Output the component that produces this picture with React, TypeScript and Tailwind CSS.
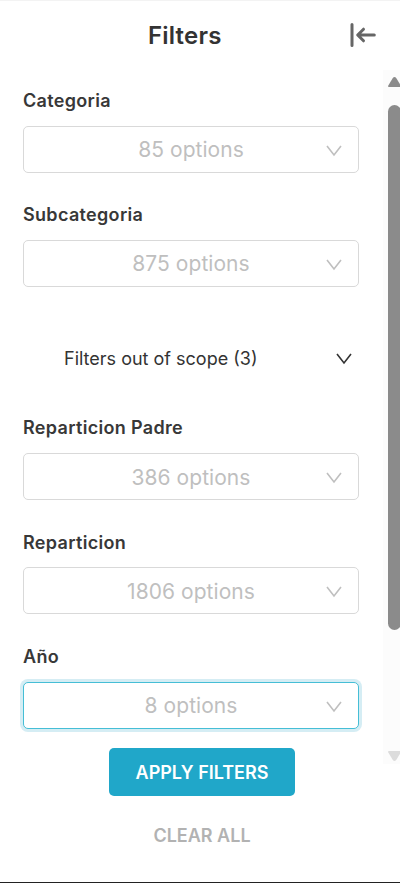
import React from "react";

function Chevron({ className }: { className: string }) {
  return (
    <svg className={className} width="16" height="12" viewBox="0 0 16 12" fill="none" stroke="currentColor" strokeWidth="1.6">
      <path d="M1 1l7 9 7-9" />
    </svg>
  );
}

type FieldProps = { label: string; count: string; focused?: boolean; labelClass?: string; countClass?: string };

function Field({ label, count, focused = false, labelClass = "", countClass = "" }: FieldProps) {
  return (
    <div className="flex flex-col">
      <label className={`h-[22px] text-[18px] leading-[22px] font-semibold tracking-[0.32px] text-[#383838] ${labelClass}`}>{label}</label>
      <div
        className={
          focused
            ? "mt-[14px] flex h-[47px] items-center rounded-[5px] border border-[#45bed6] bg-white pr-4 shadow-[0_0_0_3px_#d5edf4]"
            : "mt-[14px] flex h-[47px] items-center rounded-[5px] border border-[#d9d9d9] bg-white pr-4"
        }
      >
        <span className={`flex-1 pl-[32px] text-center text-[21px] tracking-[0.05px] text-[#bfbfbf] ${countClass}`}>{count}</span>
        <Chevron className="mt-[2px] text-[#bfbfbf]" />
      </div>
    </div>
  );
}

export default function App() {
  return (
    <div className="flex h-[883px] w-[400px] flex-col overflow-hidden border-t border-b border-t-[#f3f3f3] border-b-[#222] bg-white font-['Inter',sans-serif]">
      <header className="flex h-[67px] items-center pt-px pr-[24px] pl-[148px]">
        <h1 className="flex-1 pt-px text-[24px] font-[560] tracking-[0.2px] text-[#333]">Filters</h1>
        <svg width="27" height="24" viewBox="0 0 27 24" fill="none" stroke="#666" strokeWidth="3" strokeLinecap="round" strokeLinejoin="round">
          <path d="M3 1.500v21M9.500 12h15.800M14.500 6.200l-5.800 5.800 5.800 5.800" />
        </svg>
      </header>
      <main className="flex h-[700px]">
        <div className="w-[359px] pt-[22px] pl-[23px]">
          <Field label="Categoria" count="85 options" />
          <div className="h-[31px]" />
          <Field label="Subcategoria" count="875 options" />
          <div className="flex h-[130px] items-center pt-[13px] pr-[7px] pl-[41px] text-[18px] text-[#333]">
            <span className="flex-1">Filters out of scope (3)</span>
            <Chevron className="" />
          </div>
          <Field label="Reparticion Padre" count="386 options" countClass="pt-[2px]" />
          <div className="h-[31px]" />
          <Field label="Reparticion" count="1806 options" labelClass="pt-px" countClass="pt-[2px]" />
          <div className="h-[32px]" />
          <Field label="Año" count="8 options" focused />
        </div>
        <div className="mt-[2px] ml-auto flex h-[694px] w-[17px] flex-col bg-[#fcfcfc] pt-[6px] pl-[5px]">
          <svg className="-ml-px shrink-0" width="13" height="11" viewBox="0 0 13 11"><path d="M2 11q-1.500 0-.7-1.500l4.500-7.500q1.700-2 3.400 0l4.500 7.500q.8 1.500-.7 1.500z" fill="#8b8b8b" /></svg>
          <div className="mt-[18px] h-[525px] w-[13px] shrink-0 rounded-full bg-[#8b8b8b]" />
          <svg className="mt-[121px] -ml-px shrink-0" width="13" height="11" viewBox="0 0 13 11"><path d="M2 0q-1.500 0-.7 1.500l4.500 7.500q1.700 2 3.400 0l4.500-7.500q.8-1.500-.7-1.500z" fill="#dcdcdc" /></svg>
        </div>
      </main>
      <footer className="flex flex-col items-center pl-1 text-[18px] font-semibold">
        <button className="-mt-5 h-[48px] w-[186px] rounded-[5px] bg-[#20a7c9] text-white">APPLY FILTERS</button>
        <button className="mt-[26px] text-[#b2b2b2]">CLEAR ALL</button>
      </footer>
    </div>
  );
}
